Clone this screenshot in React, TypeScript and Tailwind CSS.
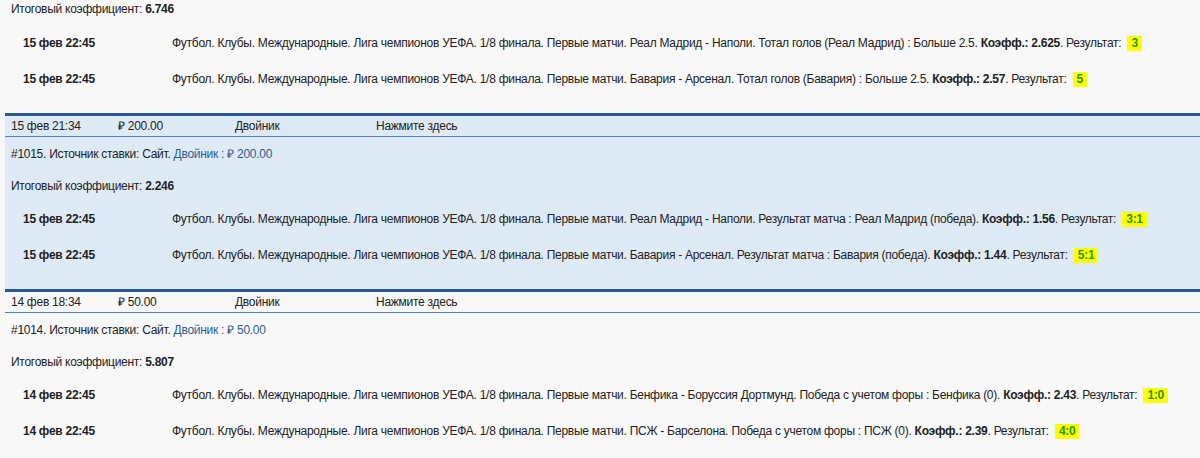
import React from "react";

type Bet = {
  date: string;
  desc: string;
  coef: string;
  result: string;
};

type Ticket = {
  id: string;
  created: string;
  amount: string;
  kind: string;
  total: string;
  active?: boolean;
  bets: Bet[];
};

const league =
  "Футбол. Клубы. Международные. Лига чемпионов УЕФА. 1/8 финала. Первые матчи. ";

const topBets: Bet[] = [
  {
    date: "15 фев 22:45",
    desc: league + "Реал Мадрид - Наполи. Тотал голов (Реал Мадрид) : Больше 2.5. ",
    coef: "2.625",
    result: "3",
  },
  {
    date: "15 фев 22:45",
    desc: league + "Бавария - Арсенал. Тотал голов (Бавария) : Больше 2.5. ",
    coef: "2.57",
    result: "5",
  },
];

const tickets: Ticket[] = [
  {
    id: "1015",
    created: "15 фев 21:34",
    amount: "₽ 200.00",
    kind: "Двойник",
    total: "2.246",
    active: true,
    bets: [
      {
        date: "15 фев 22:45",
        desc: league + "Реал Мадрид - Наполи. Результат матча : Реал Мадрид (победа). ",
        coef: "1.56",
        result: "3:1",
      },
      {
        date: "15 фев 22:45",
        desc: league + "Бавария - Арсенал. Результат матча : Бавария (победа). ",
        coef: "1.44",
        result: "5:1",
      },
    ],
  },
  {
    id: "1014",
    created: "14 фев 18:34",
    amount: "₽ 50.00",
    kind: "Двойник",
    total: "5.807",
    bets: [
      {
        date: "14 фев 22:45",
        desc: league + "Бенфика - Боруссия Дортмунд. Победа с учетом форы : Бенфика (0). ",
        coef: "2.43",
        result: "1:0",
      },
      {
        date: "14 фев 22:45",
        desc: league + "ПСЖ - Барселона. Победа с учетом форы : ПСЖ (0). ",
        coef: "2.39",
        result: "4:0",
      },
    ],
  },
];

function BetRow({ bet }: { bet: Bet }) {
  return (
    <div className="flex h-[36px] items-center whitespace-nowrap pl-[18px]">
      <div className="w-[149px] shrink-0 font-bold">{bet.date}</div>
      <div>
        {bet.desc}
        <b>Коэфф.: {bet.coef}</b>. Результат:{" "}
        <span className="ml-[3px] inline-block bg-[#ffff00] px-[4px] py-[1px] leading-[13px] font-bold text-[#1f9a1f]">
          {bet.result}
        </span>
      </div>
    </div>
  );
}

export default function App() {
  return (
    <div
      className="min-h-[458px] overflow-hidden bg-[#f8f8f8] pl-[5px] text-[12px] leading-[16px] tracking-[-0.27px] text-[#222]"
      style={{ fontFamily: '"Liberation Sans", Arial, sans-serif' }}
    >
      {/* tail of the previous ticket */}
      <div className="pb-[16px]">
        <div className="h-[25px] pl-[6px] pt-[1px]">
          Итоговый коэффициент: <b>6.746</b>
        </div>
        {topBets.map((b, i) => (
          <BetRow key={i} bet={b} />
        ))}
      </div>

      {tickets.map((t) => (
        <div key={t.id} className={t.active ? "bg-[#deebf7]" : ""}>
          {/* HEADER */}
          <div className="flex h-[24px] items-center border-t-[3px] border-b border-t-[#28578f] border-b-[#5282bb] pl-[6px]">
            <div className="w-[107px]">{t.created}</div>
            <div className="w-[117px]">{t.amount}</div>
            <div className="w-[141px]">{t.kind}</div>
            <div>Нажмите здесь</div>
          </div>

          {/* BODY */}
          <div className="h-[152px]">
            <div className="flex h-[34px] items-center pl-[6px]">
              #{t.id}. Источник ставки: Сайт.&nbsp;
              <span className="text-[#2b5d9c]">
                {t.kind} : {t.amount}
              </span>
            </div>
            <div className="flex h-[30px] items-center pl-[6px]">
              Итоговый коэффициент:&nbsp;<b>{t.total}</b>
            </div>
            {t.bets.map((b, i) => (
              <BetRow key={i} bet={b} />
            ))}
          </div>
        </div>
      ))}
    </div>
  );
}
